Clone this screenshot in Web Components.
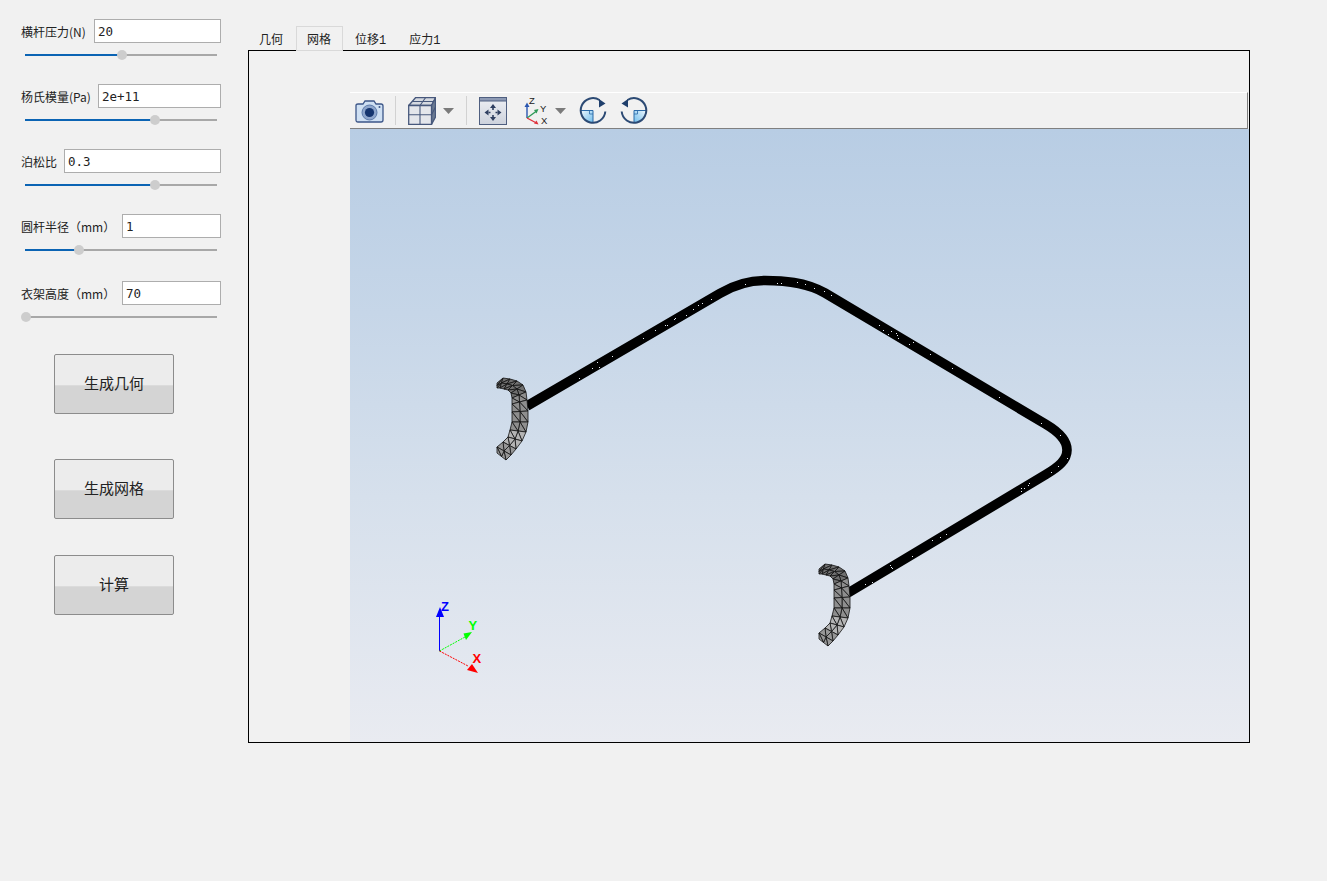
<!DOCTYPE html>
<html>
<head>
<meta charset="utf-8">
<title>衣架</title>
<style>
    html, body { margin: 0; padding: 0; background: #f1f1f1; }
    body { font-family: "Noto Sans CJK SC", "Liberation Sans", sans-serif; font-size: 12px; color: #222; }
</style>
</head>
<body>
<fem-app>
    <param-row label="横杆压力(N)" value="20" field="127" percent="50.5"></param-row>
    <param-row label="杨氏模量(Pa)" value="2e+11" field="123" percent="67.7"></param-row>
    <param-row label="泊松比" value="0.3" field="157" percent="67.7"></param-row>
    <param-row label="圆杆半径（mm）" value="1" field="99" percent="28"></param-row>
    <param-row label="衣架高度（mm）" value="70" field="99" percent="0.5" style="margin-top:2px"></param-row>
    <action-button style="margin-top:8px">生成几何</action-button>
    <action-button style="margin-top:22px">生成网格</action-button>
    <action-button style="margin-top:13px">计算</action-button>

    <tab-bar slot="main">
        <tab-item>几何</tab-item>
        <tab-item active>网格</tab-item>
        <tab-item>位移<i>1</i></tab-item>
        <tab-item>应力<i>1</i></tab-item>
    </tab-bar>
    <view-pane slot="main">
        <viewer-toolbar></viewer-toolbar>
        <mesh-viewport></mesh-viewport>
    </view-pane>
</fem-app>

<script>

class femApp extends HTMLElement {
    constructor() {
        super();
        this.attachShadow({ mode: 'open' });
        this.shadowRoot.innerHTML = `
        <style>
            :host { display: grid; grid-template-columns: 248px 1002px; height: 881px; overflow: hidden; }
            .side { display: flex; flex-direction: column; gap: 23px; padding: 19px 0 0 21px; }
            .main { display: flex; flex-direction: column; padding-top: 26px; }
        </style>
        <div class="side"><slot></slot></div>
        <div class="main"><slot name="main"></slot></div>
        `;
    }
}
customElements.define('fem-app', femApp);


class paramRow extends HTMLElement {
    constructor() {
        super();
        this.attachShadow({ mode: 'open' });
    }

    connectedCallback() {
        const percent = this.getAttribute('percent');
        this.shadowRoot.innerHTML = `
        <style>
            :host { display: block; width: 200px; }
            .top { display: flex; justify-content: space-between; align-items: center; height: 24px; }
            label { font-size: 12px; white-space: nowrap; color: #222; }
            .field {
                box-sizing: border-box; height: 24px; width: ${this.getAttribute('field')}px;
                background: #fff; border: 1px solid #adadad; padding-left: 3px;
                font: 12.5px/24px "DejaVu Sans Mono", monospace; color: #222;
            }
            .slider { position: relative; height: 12px; margin: 6px 4px 0 0; }
            .track { position: absolute; left: 4px; right: 0; top: 5px; height: 2px; background: #a8a8a8; }
            .fill { height: 2px; width: ${percent}%; background: #0b64b4; }
            .thumb {
                position: absolute; top: 1px; left: calc(4px + (100% - 4px) * ${percent / 100} - 5px);
                width: 10px; height: 10px; border-radius: 50%; background: #cdcdcd;
            }
        </style>
        <div class="top">
            <label>${this.getAttribute('label')}</label>
            <div class="field">${this.getAttribute('value')}</div>
        </div>
        <div class="slider">
            <div class="track"><div class="fill"></div></div>
            <div class="thumb"></div>
        </div>
        `;
    }
}
customElements.define('param-row', paramRow);


class actionButton extends HTMLElement {
    constructor() {
        super();
        this.attachShadow({ mode: 'open' });
        this.shadowRoot.innerHTML = `
        <style>
            :host {
                display: flex; align-items: center; justify-content: center;
                box-sizing: border-box; width: 120px; height: 60px; margin-left: 33px; padding-bottom: 3px;
                border: 1px solid #8c8c8c; border-radius: 2px;
                background: linear-gradient(#ececec 0, #ececec 30px, #e2e2e2 30px, #d4d4d4 31px, #d4d4d4 100%);
                font-size: 15px; color: #222;
            }
        </style>
        <slot></slot>
        `;
    }
}
customElements.define('action-button', actionButton);


class tabBar extends HTMLElement {
    constructor() {
        super();
        this.attachShadow({ mode: 'open' });
        this.shadowRoot.innerHTML = `
        <style>
            :host { display: flex; height: 25px; margin-bottom: -1px; position: relative; z-index: 1; }
        </style>
        <slot></slot>
        `;
    }
}
customElements.define('tab-bar', tabBar);


class tabItem extends HTMLElement {
    constructor() {
        super();
        this.attachShadow({ mode: 'open' });
        this.shadowRoot.innerHTML = `
        <style>
            :host {
                display: block; box-sizing: border-box; height: 24px; margin-top: 1px;
                padding: 0 12px 0 11px; font-size: 12px; line-height: 24px; color: #222; white-space: nowrap;
            }
            :host(:first-child) { padding-right: 13px; }
            :host([active]) {
                height: 25px; margin-top: 0; margin-right: 1px; padding: 0 11px 0 10px; line-height: 23px;
                background: #f1f1f1; border: 1px solid #d9d9d9;
            }
            ::slotted(i) { font: normal 12px "Liberation Mono", monospace; }
        </style>
        <slot></slot>
        `;
    }
}
customElements.define('tab-item', tabItem);


class viewPane extends HTMLElement {
    constructor() {
        super();
        this.attachShadow({ mode: 'open' });
        this.shadowRoot.innerHTML = `
        <style>
            :host {
                display: flex; flex-direction: column; box-sizing: border-box;
                height: 693px; border: 1px solid #000; padding: 41px 0 0 101px;
            }
        </style>
        <slot></slot>
        `;
    }
}
customElements.define('view-pane', viewPane);


class viewerToolbar extends HTMLElement {
    constructor() {
        super();
        this.attachShadow({ mode: 'open' });
        const rotate = `
            <path d="M14 13.500 H1.700 A12.300 12.300 0 0 0 14 25.800 Z" fill="url(#quad)"/>
            <path d="M1.700 13.500 H14 V25.800" fill="none" stroke="#2b6aa8" stroke-width="1"/>
            <path d="M10.500 13.500 V17 H14" fill="none" stroke="#2b6aa8" stroke-width="0.8"/>
            <path d="M20.500 3 A12.300 12.300 0 1 0 26.300 14.500" fill="none" stroke="#2c4a74" stroke-width="2"/>
            <path d="M20 2 L26.500 6.500 L20 10.500 Z" fill="#1f3f6c"/>
        `;
        this.shadowRoot.innerHTML = `
        <style>
            :host {
                display: flex; align-items: center; box-sizing: border-box; height: 37px;
                background: #f1f1f1; border-top: 1px solid #fff; border-bottom: 1px solid #808080;
                border-right: 1px solid #808080; margin-right: 1px; padding: 0 0 0 5px;
            }
            svg { display: block; flex: none; }
            .sep { width: 1px; height: 29px; background: #d2d2d2; flex: none; }
            text { font: 9.5px "Liberation Sans", sans-serif; fill: #222; }
        </style>

        <svg width="29" height="24" viewBox="0 0 29 24">
            <path d="M1 6.500 Q1 5 3 5 H8 L10 2 H19 L21 5 H26 Q28 5 28 7 V21 Q28 23 26 23 H3 Q1 23 1 21 Z" fill="#cfe0f3" stroke="#3c5688" stroke-width="1.300"/>
            <circle cx="14.500" cy="13.500" r="7.500" fill="#8ea6cc" stroke="#5d7bab"/>
            <circle cx="14.500" cy="13.500" r="4.600" fill="#15356f"/>
            <circle cx="24.500" cy="8" r="1" fill="#3c5688"/>
        </svg>
        <div class="sep" style="margin-left:11px"></div>

        <svg width="28" height="28" viewBox="0 0 28 28" style="margin-left:12px">
            <path d="M0.700 8.500 L7.500 0.700 H27.500 L23.500 8.500 Z" fill="#d5d9e0" stroke="#47587c" stroke-width="1.300"/>
            <path d="M23.500 8.500 L27.500 0.700 V20 L23.500 27.400 Z" fill="#6b7a92" stroke="#47587c" stroke-width="1.300"/>
            <path d="M0.700 8.500 H23.500 V27.400 H0.700 Z" fill="#e4e6eb" stroke="#47587c" stroke-width="1.300"/>
            <path d="M12 8.500 V27.400 M0.700 17.700 H23.500 M12 8.500 L17.500 0.700 M4 4.500 H25.500 M23.500 17.700 L27.500 10" fill="none" stroke="#47587c" stroke-width="1.100"/>
        </svg>
        <svg width="11" height="6" viewBox="0 0 11 6" style="margin-left:7px"><path d="M0 0 H11 L5.500 6 Z" fill="#7b7b7b"/></svg>
        <div class="sep" style="margin-left:12px"></div>

        <svg width="28" height="28" viewBox="0 0 28 28" style="margin-left:12px">
            <defs><linearGradient id="fitBg" x1="0" y1="0" x2="0" y2="1"><stop offset="0" stop-color="#eef0f4"/><stop offset="1" stop-color="#cdd2dc"/></linearGradient></defs>
            <rect x="0.500" y="0.500" width="27" height="27" fill="url(#fitBg)" stroke="#4f5f80"/>
            <rect x="0.500" y="0.500" width="27" height="3.500" fill="#8d9ab4" stroke="#4f5f80"/>
            <path d="M14 11 V13 M14 18 V20 M9.500 15.500 H11.500 M16.500 15.500 H18.500" stroke="#2f3f60" stroke-width="1.600"/>
            <path d="M14 7 L11 11 H17 Z M14 24 L11 20 H17 Z M5.500 15.500 L9.500 12.500 V18.500 Z M22.500 15.500 L18.500 12.500 V18.500 Z" fill="#2f3f60"/>
        </svg>

        <svg width="25" height="30" viewBox="0 0 25 30" style="margin-left:17px">
            <path d="M3 22 V10" stroke="#2a56b0" stroke-width="1.400"/>
            <path d="M3 6.500 L0.500 11 H5.500 Z" fill="#2a56b0"/>
            <path d="M3 22 L12 15.500" stroke="#2f9a58" stroke-width="1.400"/>
            <path d="M14.500 13 L10 14 L12.500 17.500 Z" fill="#2f9a58"/>
            <path d="M3 22 L11.500 26.500" stroke="#e0303a" stroke-width="1.400"/>
            <path d="M14.500 28.500 L12.500 24.500 L10 27.500 Z" fill="#e0303a"/>
            <text x="5" y="8">Z</text>
            <text x="16" y="16">Y</text>
            <text x="17" y="28">X</text>
        </svg>
        <svg width="11" height="6" viewBox="0 0 11 6" style="margin-left:6px"><path d="M0 0 H11 L5.500 6 Z" fill="#7b7b7b"/></svg>

        <svg width="28" height="28" viewBox="0 0 28 28" style="margin-left:13px">
            <defs><linearGradient id="quad" x1="0" y1="0" x2="1" y2="1"><stop offset="0" stop-color="#eef7fd"/><stop offset="1" stop-color="#6fbdec"/></linearGradient></defs>
            ${rotate}
        </svg>
        <svg width="28" height="28" viewBox="0 0 28 28" style="margin-left:13px">
            <g transform="translate(28 0) scale(-1 1)">${rotate}</g>
        </svg>
        `;
    }
}
customElements.define('viewer-toolbar', viewerToolbar);


// outline of one hook in page coordinates, outer edge and inner edge
const hookOuter = [[497,383],[503,378],[510,379],[517,381],[523,385],[526,392],[527,400],[528,411],[528,422],[526,432],[522,441],[516,449],[511,455],[506,460]];
const hookInner = [[497,388],[500,388],[504,389],[508,390],[511,393],[512,398],[512,404],[512,412],[512,422],[510,430],[508,437],[503,442],[497,447],[497,453]];

function hookMesh() {
    let out = '';
    const shade = (i) => i < 5 ? '#6f6f6f' : i < 9 ? '#8e8e8e' : i < 11 ? '#b4b4b4' : '#979797';
    const mid = (a, b) => [(a[0] + b[0]) / 2, (a[1] + b[1]) / 2];
    for (let i = 0; i < hookOuter.length - 1; i++) {
        const a = hookOuter[i], b = hookOuter[i + 1], c = hookInner[i + 1], d = hookInner[i];
        const m1 = mid(a, d), m2 = mid(b, c);
        const cells = [[a, b, m1], [b, m2, m1], [m1, m2, d], [m2, c, d]];
        cells.forEach((t) => {
            out += `<polygon points="${t.join(' ')}" fill="${shade(i)}" stroke="#111" stroke-width="0.8"/>`;
        });
    }
    return out;
}


class meshViewport extends HTMLElement {
    constructor() {
        super();
        this.attachShadow({ mode: 'open' });
        const mesh = hookMesh();
        this.shadowRoot.innerHTML = `
        <style>
            :host {
                display: block; flex: 1; min-height: 0;
                background: linear-gradient(#b8cde4, #c6d6e8 30%, #d6e0ec 60%, #e9ebf1);
            }
            svg { display: block; }
            text { font: bold 13px "Liberation Sans", sans-serif; }
        </style>
        <svg width="899" height="613" viewBox="350 129 899 613">
            <path id="tube" d="M527 406 L720 293.300 C732 286.300 746 280.500 765 280.500 C782 280.500 805 281.500 825 293 L1046 424.400 C1059 432.100 1067 440 1067 450 C1067 460 1059 466.600 1046 474.400 L848 593"
                fill="none" stroke="#000" stroke-width="9.600"/>
            <g id="dots" fill="#e8eef5"></g>
            <g>${mesh}</g>
            <g transform="translate(322 186)">${mesh}</g>

            <path d="M439.500 651 V617" stroke="#0000ff" stroke-width="1"/>
            <path d="M440 607 L436 617 H444 Z" fill="#0000ff"/>
            <path d="M439.500 651 L465 637" stroke="#00ff00" stroke-width="1" stroke-dasharray="2 1"/>
            <path d="M472 632 L463.500 633.500 L466 640 Z" fill="#00ff00"/>
            <path d="M439.500 651 L468 666" stroke="#ff0000" stroke-width="1" stroke-dasharray="2 1"/>
            <path d="M478 673 L472 664 L467 670 Z" fill="#ff0000"/>
            <text x="441" y="611" fill="#0000ff">Z</text>
            <text x="468.500" y="630" fill="#00ff00">Y</text>
            <text x="472.500" y="663" fill="#ff0000">X</text>
        </svg>
        `;
    }

    connectedCallback() {
        // scatter the little light specks that show through the dense tube mesh
        const tube = this.shadowRoot.getElementById('tube');
        const total = tube.getTotalLength();
        let seed = 7;
        let dots = '';
        for (let i = 0; i < 55; i++) {
            seed = (seed * 16807) % 2147483647;
            const p = tube.getPointAtLength((seed % 10000) / 10000 * total);
            seed = (seed * 16807) % 2147483647;
            const dx = (seed % 5) - 2;
            seed = (seed * 16807) % 2147483647;
            const dy = (seed % 5) - 2;
            dots += `<rect x="${Math.round(p.x + dx)}" y="${Math.round(p.y + dy)}" width="1" height="1"/>`;
        }
        this.shadowRoot.getElementById('dots').innerHTML = dots;
    }
}
customElements.define('mesh-viewport', meshViewport);

</script>
</body>
</html>
